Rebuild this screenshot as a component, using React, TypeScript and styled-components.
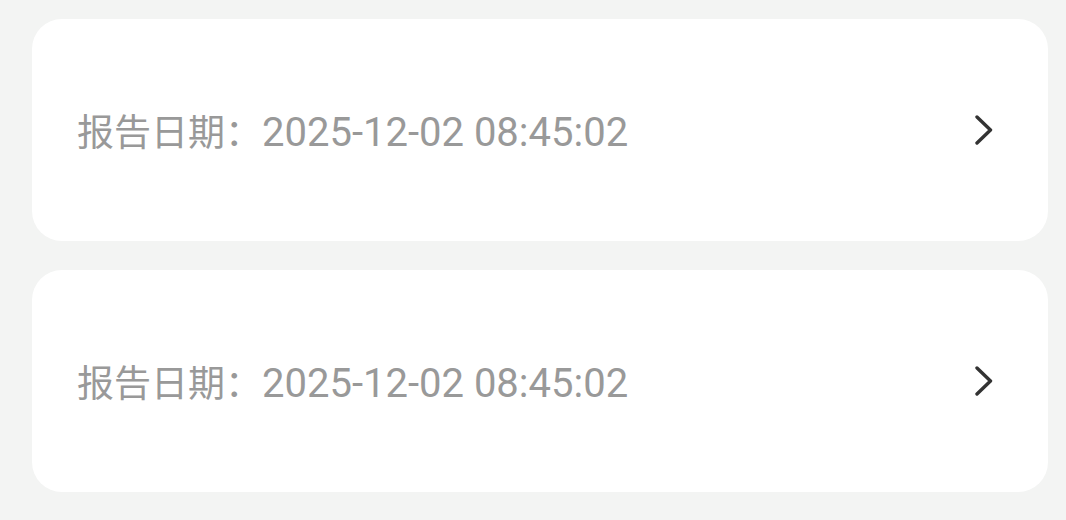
import React from 'react';
import styled, { createGlobalStyle } from 'styled-components';

const GlobalStyle = createGlobalStyle`
  html, body {
    margin: 0;
    padding: 0;
    background: #f3f4f3;
  }
`;

const List = styled.div`
  display: flex;
  flex-direction: column;
  gap: 29px;
  padding: 19px 18px 0 32px;
`;

const Card = styled.div`
  display: flex;
  align-items: center;
  justify-content: space-between;
  height: 222px;
  box-sizing: border-box;
  padding: 0 55px 0 45px;
  background: #ffffff;
  border-radius: 30px;
`;

const DateText = styled.span`
  font-family: Roboto, "Noto Sans CJK SC", sans-serif;
  font-size: 40px;
  color: #999999;
  white-space: nowrap;
`;

const Label = styled.span`
  font-family: "Noto Sans CJK SC", sans-serif;
  font-size: 37px;
`;

const Chevron = () => (
  <svg width="18" height="30" viewBox="0 0 18 30" fill="none">
    <path d="M2 2 L15.5 15 L2 28" stroke="#333333" strokeWidth="3.4" strokeLinecap="round" strokeLinejoin="round" />
  </svg>
);

const reports = ['2025-12-02 08:45:02', '2025-12-02 08:45:02'];

export default function App() {
  return (
    <>
      <GlobalStyle />
      <List>
        {reports.map((d, i) => (
          <Card key={i}>
            <DateText>
              <Label>报告日期：</Label>
              {d}
            </DateText>
            <Chevron />
          </Card>
        ))}
      </List>
    </>
  );
}
